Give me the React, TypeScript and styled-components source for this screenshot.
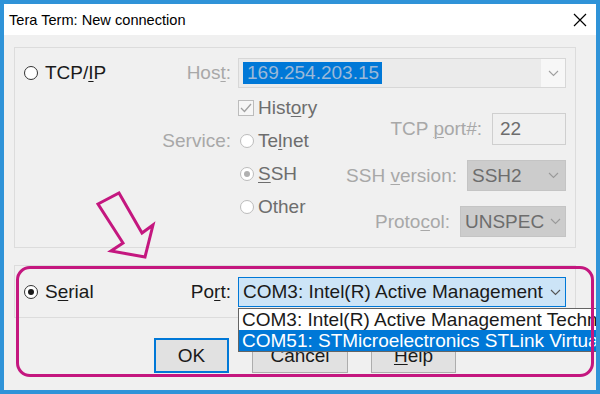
import React from 'react';
import styled, { createGlobalStyle } from 'styled-components';

const GlobalStyle = createGlobalStyle`
  html, body {
    margin: 0;
    padding: 0;
    background: #ffffff;
  }
  body {
    font-family: "Liberation Sans", Arial, sans-serif;
  }
`;

const LABEL_W = 223;

const Window = styled.div`
  position: relative;
  width: 600px;
  height: 394px;
  box-sizing: border-box;
  border: 4px solid #2f93d8;
  background: #f0f0f0;
  display: flex;
  flex-direction: column;
  overflow: hidden;
  font-size: 19px;
  color: #1a1a1a;
`;

const TitleBar = styled.div`
  height: 31px;
  flex-shrink: 0;
  background: #ffffff;
  display: flex;
  align-items: center;
  justify-content: space-between;
  padding: 0 9px 0 5px;
  font-size: 14.6px;
  color: #000;
`;

const Body = styled.div`
  flex: 1;
  display: flex;
  flex-direction: column;
  padding: 12px 20px 0 10px;
`;

const GroupBox = styled.div<{ $h: number; $top?: number }>`
  box-sizing: border-box;
  height: ${({ $h }) => $h}px;
  margin-top: ${({ $top }) => $top || 0}px;
  border: 1px solid #dcdcdc;
`;

const Row = styled.div<{ $top: number }>`
  display: flex;
  align-items: center;
  height: 30px;
  margin-top: ${({ $top }) => $top}px;
`;

const LeftCell = styled.div`
  width: ${LABEL_W}px;
  box-sizing: border-box;
  display: flex;
  align-items: center;
  justify-content: space-between;
  padding: 0 7px 0 9px;
`;

const Option = styled.label<{ $muted?: boolean; $gap?: number }>`
  display: flex;
  align-items: center;
  gap: ${({ $gap }) => $gap ?? 7}px;
  color: ${({ $muted }) => ($muted ? '#6d6d6d' : '#1a1a1a')};
`;

const Radio = styled.span<{ $checked?: boolean; $disabled?: boolean }>`
  position: relative;
  width: 14px;
  height: 14px;
  box-sizing: border-box;
  border-radius: 50%;
  border: 1px solid ${({ $disabled }) => ($disabled ? '#bcbcbc' : '#333333')};
  background: #ffffff;
  flex-shrink: 0;
  &::after {
    content: '';
    display: ${({ $checked }) => ($checked ? 'block' : 'none')};
    position: absolute;
    left: 3px;
    top: 3px;
    width: 6px;
    height: 6px;
    border-radius: 50%;
    background: ${({ $disabled }) => ($disabled ? '#b0b0b0' : '#1a1a1a')};
  }
`;

const Check = styled.span`
  width: 16px;
  height: 16px;
  box-sizing: border-box;
  border: 1px solid #bcbcbc;
  background: #f6f6f6;
  display: flex;
  align-items: center;
  justify-content: center;
  flex-shrink: 0;
`;

const Label = styled.span<{ $dim?: boolean }>`
  color: ${({ $dim }) => ($dim ? '#a8a8a8' : '#1a1a1a')};
  white-space: nowrap;
`;

const U = styled.u`
  text-underline-offset: 2px;
  text-decoration-thickness: 1px;
`;

const Combo = styled.div<{ $w: number; $h?: number; $variant: 'host' | 'disabled' | 'focus' }>`
  position: relative;
  width: ${({ $w }) => $w}px;
  height: ${({ $h }) => $h ?? 30}px;
  box-sizing: border-box;
  display: flex;
  align-items: stretch;
  border: 1px solid
    ${({ $variant }) =>
      $variant === 'focus' ? '#0078d7' : $variant === 'disabled' ? '#c4c4c4' : '#d7d7d7'};
  background: ${({ $variant }) =>
    $variant === 'focus' ? '#cce4f7' : $variant === 'disabled' ? '#cccccc' : '#ebebeb'};
  color: ${({ $variant }) => ($variant === 'disabled' ? '#6d6d6d' : '#1a1a1a')};
`;

const ComboText = styled.div`
  flex: 1;
  display: flex;
  align-items: center;
  padding-left: 4px;
  white-space: nowrap;
  overflow: hidden;
`;

const Selected = styled.span`
  background: #0078d7;
  color: #9cb9d8;
  padding: 1px 3px 1px 4px;
  line-height: 20px;
`;

const Arrow = styled.div<{ $light?: boolean; $w?: number }>`
  width: ${({ $w }) => $w ?? 24}px;
  flex-shrink: 0;
  display: flex;
  align-items: center;
  justify-content: center;
  background: ${({ $light }) => ($light ? '#f7f7f7' : 'transparent')};
`;

const Lower = styled.div`
  display: flex;
  margin-top: 3px;
`;

const ServiceCol = styled.div`
  width: ${LABEL_W}px;
  box-sizing: border-box;
  padding: 33px 7px 0 0;
  display: flex;
  justify-content: flex-end;
  align-items: center;
  height: 66px;
`;

const RadioCol = styled.div`
  display: flex;
  flex-direction: column;
`;

const RadioRow = styled.div<{ $indent?: number }>`
  height: 33px;
  display: flex;
  align-items: center;
  padding-left: ${({ $indent }) => $indent || 0}px;
`;

const RightCol = styled.div`
  margin-left: auto;
  padding: 22px 9px 0 0;
  display: flex;
  flex-direction: column;
  align-items: flex-end;
  gap: 15px;
`;

const RightRow = styled.div`
  display: flex;
  align-items: center;
  gap: 10px;
`;

const PortInput = styled.div`
  width: 74px;
  height: 32px;
  box-sizing: border-box;
  border: 1px solid #cfcfcf;
  background: #f0f0f0;
  color: #6d6d6d;
  display: flex;
  align-items: center;
  padding-left: 7px;
`;

const ComboWrap = styled.div`
  position: relative;
`;

const DropList = styled.div`
  position: absolute;
  top: calc(100% + 1px);
  left: 0;
  width: 358px;
  box-sizing: border-box;
  border: 1px solid #646464;
  border-right: none;
  background: #ffffff;
  z-index: 2;
`;

const DropItem = styled.div<{ $active?: boolean }>`
  height: 21px;
  display: flex;
  align-items: center;
  padding-left: 3px;
  white-space: nowrap;
  overflow: hidden;
  background: ${({ $active }) => ($active ? '#0078d7' : '#ffffff')};
  color: ${({ $active }) => ($active ? '#ffffff' : '#1a1a1a')};
`;

const ButtonRow = styled.div`
  display: flex;
  gap: 23px;
  margin-top: 20px;
  padding-left: 140px;
`;

const Button = styled.div<{ $w: number; $focus?: boolean }>`
  width: ${({ $w }) => $w}px;
  height: 35px;
  box-sizing: border-box;
  border: ${({ $focus }) => ($focus ? '2px solid #0078d7' : '1px solid #adadad')};
  background: #e1e1e1;
  display: flex;
  align-items: center;
  justify-content: center;
`;

const Highlight = styled.div`
  position: absolute;
  left: 12px;
  top: 262px;
  width: 578px;
  height: 111px;
  box-sizing: border-box;
  border: 3px solid #c4177f;
  border-radius: 14px;
  z-index: 3;
  pointer-events: none;
`;

const Pointer = styled.svg`
  position: absolute;
  left: 86px;
  top: 181px;
  z-index: 3;
`;

function Chevron({ color = '#333' }: { color?: string }) {
  return (
    <svg width="11" height="7" viewBox="0 0 11 7">
      <path d="M1 1 L5.5 5.5 L10 1" fill="none" stroke={color} strokeWidth="1.1" />
    </svg>
  );
}

function CloseIcon() {
  return (
    <svg width="14" height="14" viewBox="0 0 14 14">
      <path d="M1 1 L13 13 M13 1 L1 13" stroke="#000" strokeWidth="1.2" />
    </svg>
  );
}

export default function App(): React.ReactElement {
  return (
    <>
      <GlobalStyle />
      <Window>
        <TitleBar>
          <span>Tera Term: New connection</span>
          <CloseIcon />
        </TitleBar>
        <Body>
          <GroupBox $h={201}>
            <Row $top={10}>
              <LeftCell>
                <Option>
                  <Radio />
                  <span>
                    TCP/<U>I</U>P
                  </span>
                </Option>
                <Label $dim>
                  Hos<U>t</U>:
                </Label>
              </LeftCell>
              <Combo $w={328} $variant="host">
                <ComboText>
                  <Selected>169.254.203.15</Selected>
                </ComboText>
                <Arrow $light>
                  <Chevron color="#a0a0a0" />
                </Arrow>
              </Combo>
            </Row>
            <Lower>
              <ServiceCol>
                <Label $dim>Service:</Label>
              </ServiceCol>
              <RadioCol>
                <RadioRow>
                  <Option $muted $gap={4}>
                    <Check>
                      <svg width="12" height="10" viewBox="0 0 12 10">
                        <path d="M1 5 L4.5 8.5 L11 1" fill="none" stroke="#a0a0a0" strokeWidth="1.3" />
                      </svg>
                    </Check>
                    <span>
                      Hist<U>o</U>ry
                    </span>
                  </Option>
                </RadioRow>
                <RadioRow $indent={2}>
                  <Option $muted $gap={4}>
                    <Radio $disabled />
                    <span>
                      Te<U>l</U>net
                    </span>
                  </Option>
                </RadioRow>
                <RadioRow $indent={2}>
                  <Option $muted $gap={4}>
                    <Radio $disabled $checked />
                    <span>
                      <U>S</U>SH
                    </span>
                  </Option>
                </RadioRow>
                <RadioRow $indent={2}>
                  <Option $muted $gap={4}>
                    <Radio $disabled />
                    <span>Other</span>
                  </Option>
                </RadioRow>
              </RadioCol>
              <RightCol>
                <RightRow>
                  <Label $dim>
                    TCP <U>p</U>ort#:
                  </Label>
                  <PortInput>22</PortInput>
                </RightRow>
                <RightRow>
                  <Label $dim>
                    SSH <U>v</U>ersion:
                  </Label>
                  <Combo $w={99} $h={31} $variant="disabled">
                    <ComboText>SSH2</ComboText>
                    <Arrow>
                      <Chevron color="#9a9a9a" />
                    </Arrow>
                  </Combo>
                </RightRow>
                <RightRow>
                  <Label $dim>
                    Proto<U>c</U>ol:
                  </Label>
                  <Combo $w={106} $h={31} $variant="disabled">
                    <ComboText>UNSPEC</ComboText>
                    <Arrow $w={20}>
                      <Chevron color="#9a9a9a" />
                    </Arrow>
                  </Combo>
                </RightRow>
              </RightCol>
            </Lower>
          </GroupBox>

          <GroupBox $h={53} $top={17}>
            <Row $top={11}>
              <LeftCell>
                <Option>
                  <Radio $checked />
                  <span>
                    S<U>e</U>rial
                  </span>
                </Option>
                <Label>
                  Po<U>r</U>t:
                </Label>
              </LeftCell>
              <ComboWrap>
                <Combo $w={328} $variant="focus">
                  <ComboText>COM3: Intel(R) Active Management</ComboText>
                  <Arrow $w={19}>
                    <Chevron color="#555" />
                  </Arrow>
                </Combo>
                <DropList>
                  <DropItem>COM3: Intel(R) Active Management Technology - SOL</DropItem>
                  <DropItem $active>COM51: STMicroelectronics STLink Virtual COM Port</DropItem>
                </DropList>
              </ComboWrap>
            </Row>
          </GroupBox>

          <ButtonRow>
            <Button $w={75} $focus>
              OK
            </Button>
            <Button $w={96}>Cancel</Button>
            <Button $w={85}>
              <span>
                <U>H</U>elp
              </span>
            </Button>
          </ButtonRow>
        </Body>

        <Highlight />
        <Pointer width="70" height="80" viewBox="0 0 70 80">
          <polygon
            points="29,8 52,48 63,40 55,72 21,66 33,58 8,19"
            fill="none"
            stroke="#c4177f"
            strokeWidth="3"
            strokeLinejoin="miter"
          />
        </Pointer>
      </Window>
    </>
  );
}
